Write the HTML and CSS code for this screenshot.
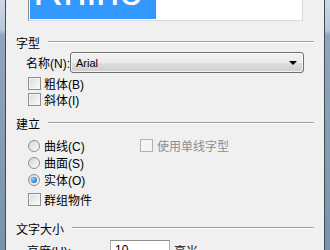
FILE: index.html
```html
<!DOCTYPE html>
<html lang="zh">
<head>
    <meta charset="UTF-8">
    <title>文本物件</title>
    <link rel="stylesheet" href="styles.css">
</head>
<body>
    <div class="window">
        <div class="preview">
            <div class="preview-sel"><span class="preview-text">Rhino</span></div>
        </div>

        <div class="group-title first">
            <span>字型</span>
            <div class="rule"></div>
        </div>
        <div class="row name-row">
            <label class="name-label">名称(N):</label>
            <div class="combo">
                <span>Arial</span>
                <span class="arrow"></span>
            </div>
        </div>
        <div class="row check-row first-check">
            <span class="check"></span><span>粗体(B)</span>
        </div>
        <div class="row check-row">
            <span class="check"></span><span>斜体(I)</span>
        </div>

        <div class="group-title second">
            <span>建立</span>
            <div class="rule"></div>
        </div>
        <div class="options">
            <div class="row radio-row">
                <span class="radio"></span><span>曲线(C)</span>
            </div>
            <div class="row radio-row disabled">
                <span class="check"></span><span>使用单线字型</span>
            </div>
            <div class="row radio-row">
                <span class="radio"></span><span>曲面(S)</span>
            </div>
            <div></div>
            <div class="row radio-row">
                <span class="radio on"></span><span>实体(O)</span>
            </div>
        </div>
        <div class="row check-row group-check">
            <span class="check"></span><span>群组物件</span>
        </div>

        <div class="group-title third">
            <span>文字大小</span>
            <div class="rule"></div>
        </div>
        <div class="row height-row">
            <label class="height-label">高度(H):</label>
            <div class="textbox">10</div>
            <span class="unit">毫米</span>
        </div>
    </div>
</body>
</html>
```

FILE: styles.css
```css
* {
    margin: 0;
    padding: 0;
    box-sizing: border-box;
}

body {
    width: 330px;
    height: 250px;
    overflow: hidden;
    background: linear-gradient(180deg, #cdd8e3 0%, #b7c7d7 12%, #91a6bb 14%, #7a92aa 100%);
    font-family: 'Liberation Sans', 'Noto Sans CJK SC', sans-serif;
    font-size: 12px;
    color: #000;
    white-space: nowrap;
}

.window {
    margin: 0 5px;
    height: 250px;
    overflow: hidden;
    background: #f0f0f0;
    border-left: 1px solid #3e4c5a;
    border-right: 1px solid #3e4c5a;
}

/* preview box, scrolled so only the bottom shows */
.preview {
    margin-left: 22px;
    width: 275px;
    height: 21px;
    background: #fff;
    border: 1px solid #d9d9d9;
    border-top: none;
    border-left-color: #8a8a8a;
    padding-left: 1px;
    overflow: hidden;
}

.preview-sel {
    width: 126px;
    height: 19px;
    background: #3399ff;
    overflow: hidden;
}

.preview-text {
    display: block;
    margin-top: -29px;
    margin-left: 3px;
    color: #fff;
    font-family: 'Liberation Sans', sans-serif;
    font-size: 42px;
    line-height: 40px;
}

.group-title {
    display: flex;
    align-items: center;
    height: 16px;
    padding: 0 10px;
    gap: 8px;
}

.group-title .rule {
    flex: 1;
    border-top: 1px solid #a0a0a0;
    border-bottom: 1px solid #fff;
}

.group-title.first { margin-top: 13px; }
.group-title.second { margin-top: 8px; }
.group-title.third { margin-top: 12px; }

.row {
    display: flex;
    align-items: center;
}

.name-row {
    margin-top: 2px;
    height: 21px;
    padding-left: 20px;
}

.name-label {
    width: 44px;
    flex-shrink: 0;
}

.combo {
    width: 234px;
    height: 21px;
    border: 1px solid #707070;
    border-radius: 3px;
    background: linear-gradient(180deg, #f2f2f2 0%, #ebebeb 50%, #dddddd 51%, #cfcfcf 100%);
    box-shadow: inset 0 0 0 1px rgba(255, 255, 255, 0.7);
    display: flex;
    align-items: center;
    justify-content: space-between;
    padding: 0 6px 0 5px;
    font-size: 11px;
}

.arrow {
    width: 0;
    height: 0;
    border-left: 4px solid transparent;
    border-right: 4px solid transparent;
    border-top: 4px solid #000;
}

.check-row {
    height: 16px;
    padding-left: 22px;
    gap: 3px;
}

.first-check { margin-top: 2px; }

.check {
    width: 13px;
    height: 13px;
    flex-shrink: 0;
    border: 1px solid #8e8f8f;
    background: linear-gradient(135deg, #dadada, #fbfbfb);
    box-shadow: inset 0 0 0 1px #f4f4f4;
}

.options {
    margin-top: 6px;
    padding-left: 22px;
    display: grid;
    grid-template-columns: 112px auto;
}

.radio-row {
    height: 17px;
    gap: 4px;
}

.radio {
    width: 12px;
    height: 12px;
    flex-shrink: 0;
    border-radius: 50%;
    border: 1px solid #8e8f8f;
    background: linear-gradient(135deg, #d4d4d4, #fcfcfc);
    display: flex;
    align-items: center;
    justify-content: center;
}

.radio.on::after {
    content: '';
    width: 6px;
    height: 6px;
    border-radius: 50%;
    background: radial-gradient(circle at 35% 35%, #8fd6ff, #1c78d0 70%, #0d4f99);
}

.disabled {
    color: #8d8d8d;
}

.disabled .check {
    border-color: #b1b1b1;
    background: #f4f4f4;
}

.group-check {
    margin-top: 3px;
    height: 17px;
}

.height-row {
    margin-top: 4px;
    height: 21px;
    padding-left: 21px;
}

.height-label {
    width: 83px;
    flex-shrink: 0;
}

.textbox {
    width: 60px;
    height: 21px;
    flex-shrink: 0;
    background: #fff;
    border: 1px solid #abadb3;
    border-top-color: #8e8f8f;
    padding: 2px 0 0 4px;
    font-size: 12px;
}

.unit {
    margin-left: 4px;
}
```
